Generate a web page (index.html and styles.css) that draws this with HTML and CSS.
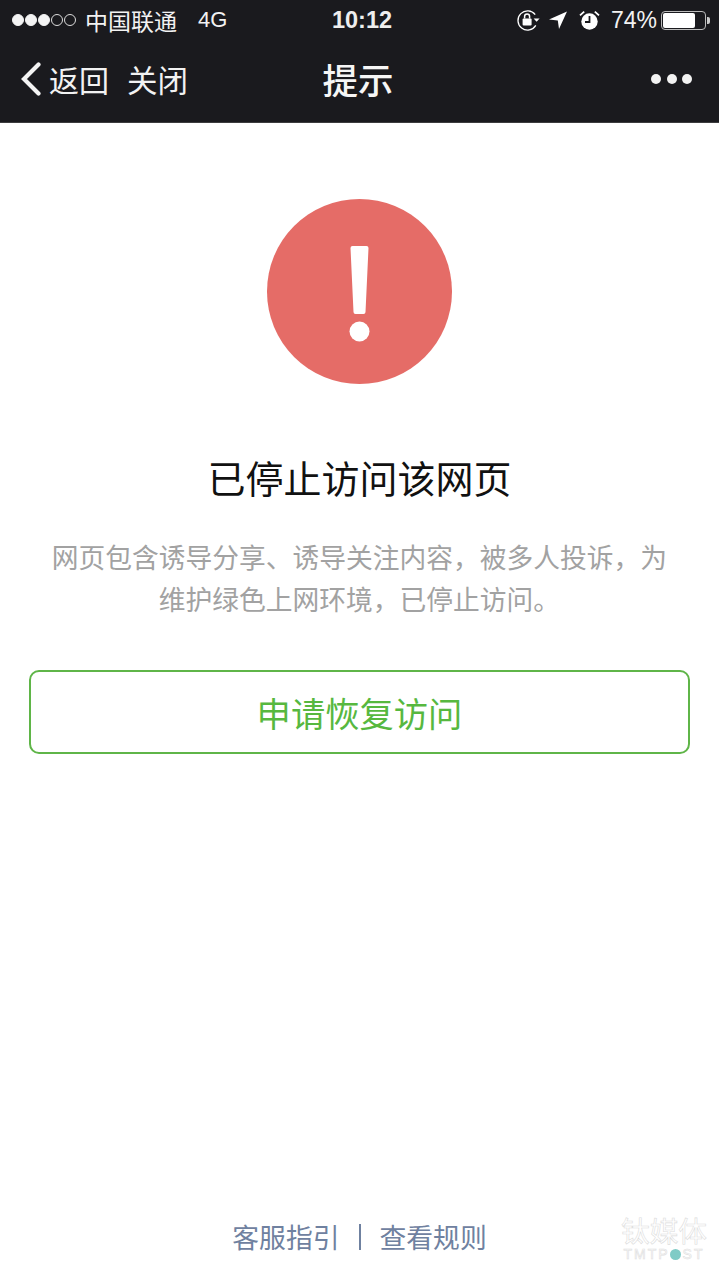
FILE: index.html
```html
<!DOCTYPE html>
<html lang="zh-CN">
<head>
<meta charset="utf-8">
<title>提示</title>
<link rel="stylesheet" href="styles.css">
</head>
<body>
<div class="page">
  <header class="topbar">
    <div class="status">
      <div class="status-left">
        <span class="signal"><i class="on"></i><i class="on"></i><i class="on"></i><i></i><i></i></span>
        <span class="carrier">中国联通</span>
        <span class="net">4G</span>
      </div>
      <div class="clock">10:12</div>
      <div class="status-right">
        <svg class="ic-lock" width="24" height="24" viewBox="0 0 24 24"><path d="M19.2 6.6A9.6 9.6 0 1 0 19.8 17.4" fill="none" stroke="#fff" stroke-width="1.3"/><path d="M17.6 10.4h6l-3 3.4z" fill="#fff"/><rect x="6.6" y="10.4" width="9" height="7.2" rx="1" fill="#fff"/><path d="M8.6 10.6V8.6a2.5 2.5 0 0 1 5 0v2" fill="none" stroke="#fff" stroke-width="1.5"/></svg>
        <svg class="ic-loc" width="18" height="18" viewBox="0 0 18 18"><path d="M18 0.5 L0 8.6 L8.8 9.4 L10 18z" fill="#fff"/></svg>
        <svg class="ic-alarm" width="21" height="21" viewBox="0 0 21 21"><circle cx="10.5" cy="11.5" r="8.2" fill="#fff"/><path d="M10.5 6v6H6" fill="none" stroke="#1a1a1e" stroke-width="1.8"/><path d="M1 5.4 5.2 1.6M20 5.4 15.8 1.6" stroke="#fff" stroke-width="1.8"/></svg>
        <span class="pct">74%</span>
        <span class="battery"><span class="battery-fill"></span></span><span class="battery-tip"></span>
      </div>
    </div>
    <nav class="nav">
      <div class="nav-left">
        <svg class="back" width="22" height="34" viewBox="0 0 22 34"><path d="M18.500 2.500 L4 17 L18.500 31.500" fill="none" stroke="#f4f4f4" stroke-width="4.2" stroke-linecap="round"/></svg>
        <span class="nav-link">返回</span>
        <span class="nav-link close">关闭</span>
      </div>
      <div class="nav-title">提示</div>
      <div class="more"><i></i><i></i><i></i></div>
    </nav>
  </header>

  <main class="content">
    <svg class="warn" width="185" height="185" viewBox="0 0 185 185">
      <circle cx="92.5" cy="92.5" r="92.5" fill="#e56c67"/>
      <path d="M83.5 49a2 2 0 0 1 2-2h14a2 2 0 0 1 2 2l-3 64a2 2 0 0 1-2 2h-8a2 2 0 0 1-2-2z" fill="#fff"/>
      <circle cx="92.500" cy="132.500" r="10" fill="#fff"/>
    </svg>
    <h1 class="title">已停止访问该网页</h1>
    <p class="desc">网页包含诱导分享、诱导关注内容，被多人投诉，为<br>维护绿色上网环境，已停止访问。</p>
    <div class="action">申请恢复访问</div>
  </main>

  <footer class="footer">
    <span class="foot-link">客服指引</span>
    <span class="sep"></span>
    <span class="foot-link">查看规则</span>
  </footer>

  <div class="mark">
    <div class="mark-cn">钛媒体</div>
    <div class="mark-en">TMTP<span class="mark-o"></span>ST</div>
  </div>
</div>
</body>
</html>
```

FILE: styles.css
```css
* { box-sizing: border-box; }
html, body { margin: 0; padding: 0; background: #fff; }
body { font-family: "Liberation Sans", "Noto Sans CJK SC", sans-serif; }
.page { position: relative; width: 719px; height: 1280px; overflow: hidden; display: flex; flex-direction: column; background: #fff; }

.topbar { height: 123px; flex: none; background: #1a1a1e; color: #f2f2f2; border-bottom: 1px solid #3c3c3e; }
.status { height: 40px; display: grid; grid-template-columns: 1fr auto 1fr; align-items: center; padding: 0 9px 0 12px; }
.status-left { display: flex; align-items: center; }
.signal { display: flex; gap: 1px; width: 66px; }
.signal i { width: 12px; height: 12px; border-radius: 50%; border: 1px solid #ddd; }
.signal i.on { background: #f4f4f4; border-color: #f4f4f4; }
.carrier { margin-left: 7px; font-size: 23px; line-height: 40px; font-family: "Noto Sans CJK SC", sans-serif; }
.net { margin-left: 21px; font-size: 22px; }
.clock { margin-left: 2px; font-size: 23.5px; font-weight: 700; color: #eee; font-family: "Liberation Sans", sans-serif; }
.status-right { display: flex; align-items: center; justify-content: flex-end; }
.ic-loc { margin-left: 9px; }
.ic-alarm { margin-left: 12px; }
.pct { margin-left: 11px; font-size: 23px; }
.battery { margin-left: 4px; width: 45px; height: 19px; border: 1px solid #bbb; border-radius: 4px; padding: 1px; display: block; }
.battery-fill { display: block; width: 32px; height: 100%; background: #fff; border-radius: 2px; }
.battery-tip { width: 3px; height: 7px; background: #ccc; border-radius: 0 2px 2px 0; margin-left: 1px; }

.nav { height: 82px; display: grid; grid-template-columns: 1fr auto 1fr; align-items: center; padding: 0 27px 4px 24px; }
.nav-left { display: flex; align-items: center; margin-left: -4px; }
.back { flex: none; }
.nav-link { margin-left: 7px; font-size: 30px; font-family: "Noto Sans CJK SC", sans-serif; font-weight: 400; }
.nav-link.close { margin-left: 18px; font-size: 30.500px; }
.nav-title { font-size: 35.500px; font-weight: 500; color: #f6f6f6; font-family: "Noto Sans CJK SC", sans-serif; margin-bottom: 2px; }
.more { display: flex; justify-content: flex-end; gap: 5.5px; }
.more i { width: 10px; height: 10px; border-radius: 50%; background: #f2f2f2; }

.content { flex: 1; display: flex; flex-direction: column; align-items: center; padding: 76px 29px 0; font-family: "Noto Sans CJK SC", sans-serif; }
.warn { display: block; flex: none; }
.title { margin: 65px 0 0; font-size: 38px; line-height: 56px; font-weight: 400; color: #111; }
.desc { margin: 31px 0 0; font-size: 26.75px; line-height: 42px; color: #a2a2a2; text-align: center; white-space: nowrap; }
.action { margin-top: 50px; width: 100%; height: 84px; border: 2px solid #5fb548; border-radius: 10px; display: flex; align-items: center; justify-content: center; font-size: 34.300px; color: #57b83f; }

.footer { flex: none; height: 84px; display: flex; align-items: flex-start; justify-content: center; padding-top: 22px; font-family: "Noto Sans CJK SC", sans-serif; }
.foot-link { font-size: 26.800px; line-height: 38px; color: #6f81a0; }
.sep { width: 2px; height: 26px; margin: 6px 19px 0 19px; background: #6f81a0; }

.mark { position: absolute; left: 621px; top: 1219px; width: 86px; color: transparent; text-align: center; }
.mark-cn { font-family: "Liberation Sans", "Noto Sans CJK SC", sans-serif; font-size: 28.700px; line-height: 27px; white-space: nowrap; -webkit-text-stroke: 0.6px #dcdcdc; }
.mark-en { display: flex; align-items: center; justify-content: center; font-family: "Liberation Sans", sans-serif; font-size: 14px; line-height: 14px; letter-spacing: 2px; margin-top: 1px; -webkit-text-stroke: 0.6px #dedede; }
.mark-o { width: 11px; height: 11px; border-radius: 50%; background: #7fcbc6; margin: 0 2px 0 0; }
```
